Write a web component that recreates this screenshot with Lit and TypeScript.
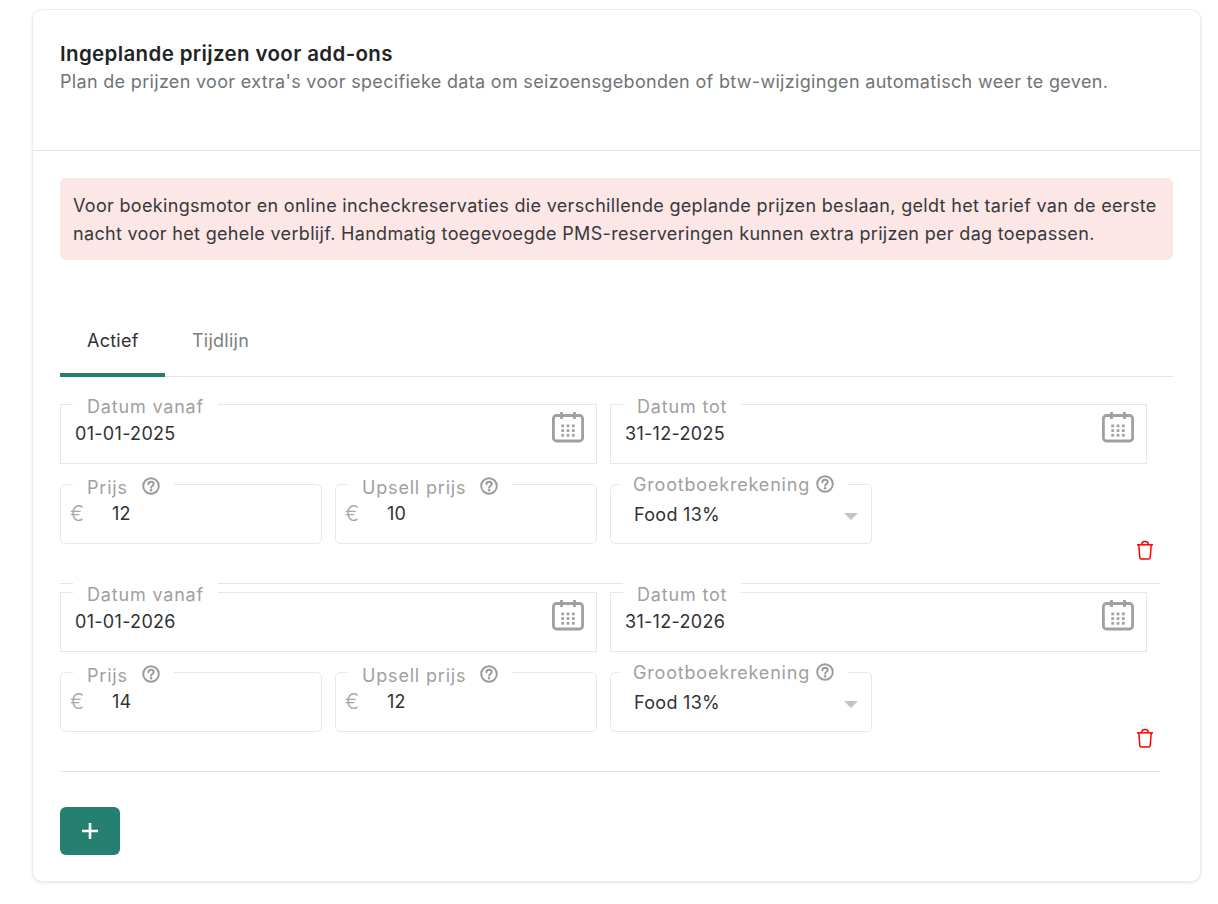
import { LitElement, html, css, svg } from "lit";
import { customElement } from "lit/decorators.js";

const help = html`<svg class="help" viewBox="0 0 18 18" fill="none" stroke="#9a9a9a" stroke-width="1.9">
  <circle cx="9" cy="9" r="7.8"></circle>
  <path d="M6.4 7.2c0-1.5 1.2-2.5 2.7-2.5s2.6 1 2.6 2.3c0 1.9-2.6 2-2.6 3.7" stroke-linecap="round"></path>
  <circle cx="9.1" cy="13.3" r="1.2" fill="#9a9a9a" stroke="none"></circle>
</svg>`;

const dots = [0, 1, 2].flatMap((r) =>
  [0, 1, 2].map((c) => svg`<rect x="${9.3 + c * 5.3}" y="${13.5 + r * 4.7}" width="2.8" height="2.8" fill="#a3a3a3"></rect>`)
);

const calendar = html`<svg class="cal" viewBox="0 0 32 32" fill="none">
  <rect x="1.4" y="4.5" width="29.2" height="25.5" rx="3" stroke="#a0a0a0" stroke-width="2.8"></rect>
  <path d="M9.5 1v7M22.5 1v7" stroke="#a0a0a0" stroke-width="2.8"></path>
  ${dots}
</svg>`;

const trash = html`<svg class="trash" viewBox="0 0 18 20" fill="none" stroke="#ff0000" stroke-width="1.5">
  <path d="M1 4.8h16"></path>
  <path d="M2.8 4.8l1 12.8c.1.9.6 1.4 1.5 1.4h7.4c.9 0 1.4-.5 1.5-1.4l1-12.8"></path>
  <path d="M5.6 4.8c0-2.4 1-3.4 3.4-3.4s3.4 1 3.4 3.4"></path>
</svg>`;

interface Entry {
  from: string;
  to: string;
  price: string;
  upsell: string;
}

const entries: Entry[] = [
  { from: "01-01-2025", to: "31-12-2025", price: "12", upsell: "10" },
  { from: "01-01-2026", to: "31-12-2026", price: "14", upsell: "12" },
];

@customElement("app-root")
export class AppRoot extends LitElement {
  static styles = css`
    :host {
      display: block;
      font-family: Inter, "Liberation Sans", sans-serif;
      color: #303133;
      background: #fff;
      height: 904px;
      box-sizing: border-box;
      padding: 9px 17px 0 32px;
    }
    * { box-sizing: border-box; }
    .card {
      height: 873px;
      border: 1px solid #ececec;
      border-radius: 10px;
      box-shadow: 0 1px 3px rgba(0, 0, 0, 0.1);
      background: #fff;
    }
    .head {
      height: 141px;
      padding: 31px 27px 0;
      border-bottom: 1px solid #e4e4e7;
    }
    h1 {
      margin: 0;
      font-size: 20.5px;
      line-height: 26px;
      letter-spacing: 0.36px;
      font-weight: 600;
      color: #1f2426;
    }
    .sub {
      margin: 0;
      padding-top: 1px;
      font-size: 18px;
      line-height: 28px;
      letter-spacing: 0.32px;
      color: #6f7477;
    }
    .body { padding: 27px 27px 0; }
    .alert {
      background: #fde6e6;
      border-radius: 6px;
      padding: 14px 13px 0;
      font-size: 18px;
      line-height: 28px;
      letter-spacing: 0.32px;
      color: #36393b;
      height: 82px;
    }
    .tabs {
      display: flex;
      margin-top: 40px;
      height: 77px;
      border-bottom: 1px solid #e4e4e7;
    }
    .tab {
      width: 105px;
      padding: 28px 0 0 27px;
      font-size: 18px;
      line-height: 26px;
      letter-spacing: 0.25px;
      color: #7a7f82;
    }
    .tab.on {
      color: #303133;
      border-bottom: 4px solid #26806f;
      border-radius: 4px 4px 0 0;
      margin-bottom: -1px;
    }
    .item {
      width: 1100px;
      border-bottom: 1px solid #e4e4e7;
      padding-bottom: 23px;
    }
    .tabs + .item { margin-top: 17px; }
    .item + .item { margin-top: -2px; }
    .row { display: flex; gap: 13px; }
    .row + .row { margin-top: 10px; }
    fieldset {
      margin: 0;
      padding: 0;
      min-width: 0;
      border: 1px solid #e8e8e8;
      height: 70px;
    }
    .wide { width: 537px; }
    .narrow { width: 262px; border-radius: 5px; margin-bottom: 16px; }
    legend {
      display: flex;
      align-items: center;
      height: 20px;
      margin-left: 12px;
      padding: 4px 14px 0;
      font-size: 18px;
      letter-spacing: 0.82px;
      color: #a0a0a0;
      background: #fff;
      white-space: nowrap;
    }
    .narrow legend:not(.gl) { padding-top: 6px; }
    .narrow legend:not(.gl) .help { margin-top: -2px; }
    legend.gl {
      margin-left: 9px;
      padding: 0 14px 0 13px;
    }
    legend .help { margin-left: 14px; }
    legend.gl .help { margin-left: 6px; }
    .help { width: 18px; height: 18px; flex: none; }
    .inner {
      display: flex;
      align-items: flex-start;
      height: 48px;
      padding: 8px 12px 0 14px;
      font-size: 18px;
      letter-spacing: 0.3px;
      line-height: 24px;
      color: #303133;
    }
    .val { flex: 1; }
    .cal { width: 32px; height: 32px; margin-top: -11px; flex: none; }
    .euro {
      width: 42px;
      margin-left: -5px;
      font-weight: 300;
      font-family: Inter, sans-serif;
      color: #a8a8a8;
      font-size: 21px;
    }
    .inner.select { padding-left: 23px; padding-top: 9px; padding-right: 13px; }
    .caret {
      width: 0;
      height: 0;
      margin-top: 10px;
      border-left: 7px solid transparent;
      border-right: 7px solid transparent;
      border-top: 7px solid #c4c4c4;
    }
    .trash-btn {
      margin-left: auto;
      margin-right: 6px;
      align-self: flex-end;
      display: flex;
      height: 20px;
    }
    .trash { width: 18px; height: 20px; }
    .add {
      margin-top: 35px;
      width: 60px;
      height: 48px;
      border-radius: 6px;
      background: #26806f;
      display: flex;
      align-items: center;
      justify-content: center;
    }
    .add svg { width: 18px; height: 18px; }
  `;

  private dateField(label: string, value: string) {
    return html`<fieldset class="wide">
      <legend>${label}</legend>
      <div class="inner"><span class="val">${value}</span>${calendar}</div>
    </fieldset>`;
  }

  private priceField(label: string, value: string) {
    return html`<fieldset class="narrow">
      <legend>${label}${help}</legend>
      <div class="inner price"><span class="euro">€</span><span class="val">${value}</span></div>
    </fieldset>`;
  }

  render() {
    return html`<div class="card">
      <div class="head">
        <h1>Ingeplande prijzen voor add-ons</h1>
        <p class="sub">Plan de prijzen voor extra's voor specifieke data om seizoensgebonden of btw-wijzigingen automatisch weer te geven.</p>
      </div>
      <div class="body">
        <div class="alert">Voor boekingsmotor en online incheckreservaties die verschillende geplande prijzen beslaan, geldt het tarief van de eerste nacht voor het gehele verblijf. Handmatig toegevoegde PMS-reserveringen kunnen extra prijzen per dag toepassen.</div>
        <div class="tabs">
          <div class="tab on">Actief</div>
          <div class="tab">Tijdlijn</div>
        </div>
        ${entries.map(
          (e) => html`<div class="item">
            <div class="row">${this.dateField("Datum vanaf", e.from)}${this.dateField("Datum tot", e.to)}</div>
            <div class="row">
              ${this.priceField("Prijs", e.price)}${this.priceField("Upsell prijs", e.upsell)}
              <fieldset class="narrow">
                <legend class="gl">Grootboekrekening${help}</legend>
                <div class="inner select"><span class="val">Food 13%</span><span class="caret"></span></div>
              </fieldset>
              <div class="trash-btn">${trash}</div>
            </div>
          </div>`
        )}
        <div class="add">
          <svg viewBox="0 0 18 18" fill="none" stroke="#fff" stroke-width="2.6"><path d="M9 1v16M1 9h16"></path></svg>
        </div>
      </div>
    </div>`;
  }
}
